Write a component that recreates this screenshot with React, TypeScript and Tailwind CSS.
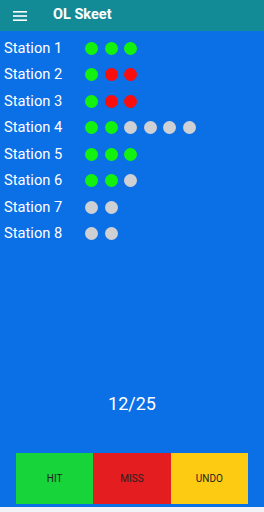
const G = "bg-[#13f20f]";
const R = "bg-[#f90d0d]";
const N = "bg-[#cfd0d4]";

type Dot = "g" | "r" | "n";

const stations: { name: string; dots: Dot[] }[] = [
  { name: "Station 1", dots: ["g", "g", "g"] },
  { name: "Station 2", dots: ["g", "r", "r"] },
  { name: "Station 3", dots: ["g", "r", "r"] },
  { name: "Station 4", dots: ["g", "g", "n", "n", "n", "n"] },
  { name: "Station 5", dots: ["g", "g", "g"] },
  { name: "Station 6", dots: ["g", "g", "n"] },
  { name: "Station 7", dots: ["n", "n"] },
  { name: "Station 8", dots: ["n", "n"] },
];

function dotClass(d: Dot) {
  if (d === "g") return G;
  if (d === "r") return R;
  return N;
}

export default function App() {
  return (
    <div className="w-[264px] h-[512px] flex flex-col bg-[#f1f3f6] font-['Roboto','Liberation_Sans',sans-serif] overflow-hidden">
      {/* app bar */}
      <div className="h-[31px] shrink-0 bg-[#138b97] flex items-center">
        <svg width="14" height="10" viewBox="0 0 14 10" className="ml-[13px]">
          <rect x="0" y="0" width="14" height="1.6" fill="#fff" />
          <rect x="0" y="4.2" width="14" height="1.6" fill="#fff" />
          <rect x="0" y="8.4" width="14" height="1.6" fill="#fff" />
        </svg>
        <span className="ml-[26px] text-white font-bold text-[14.5px] leading-none">OL Skeet</span>
      </div>

      {/* body */}
      <div className="h-[476px] shrink-0 bg-[#0b6fe6] flex flex-col">
        <div className="pt-[4px] flex flex-col">
          {stations.map((s) => (
            <div key={s.name} className="h-[26.5px] flex items-center">
              <span className="w-[85px] pl-[4px] text-white text-[14.7px] leading-none">{s.name}</span>
              <div className="flex gap-[6.5px]">
                {s.dots.map((d, i) => (
                  <span key={i} className={`w-[13px] h-[13px] rounded-full ${dotClass(d)}`} />
                ))}
              </div>
            </div>
          ))}
        </div>

        <div className="flex-1" />

        <div className="text-center text-white text-[18px] leading-none mb-[40px]">12/25</div>

        <div className="mx-[16px] h-[51px] flex mb-[3px] text-[10px] text-[#222]">
          <div className="flex-1 bg-[#17d43a] flex items-center justify-center">HIT</div>
          <div className="flex-1 bg-[#e41d20] flex items-center justify-center">MISS</div>
          <div className="flex-1 bg-[#fdcb12] flex items-center justify-center">UNDO</div>
        </div>
      </div>
    </div>
  );
}
